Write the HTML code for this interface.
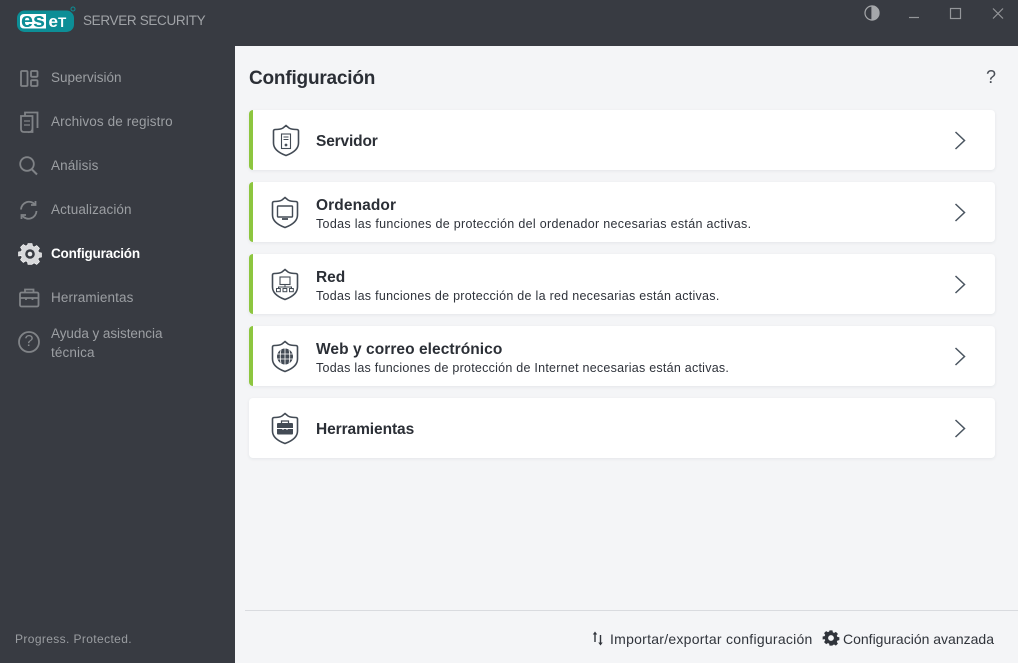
<!DOCTYPE html>
<html lang="es"><head><meta charset="utf-8"><title>ESET Server Security</title>
<style>
html,body{margin:0;padding:0}
body{width:1018px;height:663px;position:relative;overflow:hidden;background:#383b42;font-family:"Liberation Sans",sans-serif}
.t{position:absolute;white-space:nowrap;line-height:20px}
.nav{left:51px;font-size:13.5px;color:#9c9fa3;letter-spacing:.12px}
#main{position:absolute;left:235px;top:46px;width:783px;height:617px;background:#f4f5f7}
.card{position:absolute;left:249px;width:746px;height:60px;background:#fff;border-radius:4px;box-shadow:0 1px 3px rgba(40,50,60,.08);overflow:hidden}
.card.g:before{content:"";position:absolute;left:0;top:0;bottom:0;width:4px;background:#8dc63f}
.h{left:316px;font-size:15.5px;font-weight:bold;color:#2b2f36;letter-spacing:-.05px}
.s{left:316px;font-size:12.5px;color:#2e323a}
svg{position:absolute;overflow:visible}
.f{font-size:14px;color:#30343b}
</style></head><body>
<div id="main"></div>

<!-- logo -->
<svg style="left:0;top:0" width="100" height="45">
<rect x="17" y="10.5" width="57" height="21.5" rx="7.5" fill="#0d8e96"/>
<path d="M24 14H46V28.500H24Q20 28.500 20 24.500V18Q20 14 24 14Z" fill="#fff"/>
<text x="21" y="27" font-family="Liberation Sans" font-weight="bold" font-size="20" fill="#0d8e96" textLength="24" lengthAdjust="spacingAndGlyphs">es</text>
<text x="48.500" y="27" font-family="Liberation Sans" font-weight="bold" font-size="17" fill="#fff">e<tspan font-size="13.500">T</tspan></text>
<circle cx="73" cy="9" r="2" fill="none" stroke="#0d8e96"/>
</svg>
<div class="t" style="left:83px;top:11px;font-size:13.5px;color:#a0a3a7;letter-spacing:-.33px">SERVER SECURITY</div>

<!-- window controls -->
<svg style="left:0;top:0" width="1018" height="46" fill="none" stroke="#94969a" stroke-width="1.2">
<circle cx="872" cy="13" r="7" stroke="#a5a7aa"/><path d="M872 6a7 7 0 0 1 0 14Z" fill="#a5a7aa" stroke="#a5a7aa"/>
<path d="M909 17.500h10"/>
<rect x="950.500" y="8.500" width="10" height="10"/>
<path d="M993 8.500l10 10M1003 8.500l-10 10"/>
</svg>

<!-- nav icons -->
<svg style="left:0;top:0" width="235" height="400" fill="none" stroke="#808387" stroke-width="1.800">
<rect x="21" y="71" width="6.500" height="15" rx="1"/><rect x="31" y="71" width="6.500" height="5.800" rx="1"/><rect x="31" y="80.200" width="6.500" height="5.800" rx="1"/>
<path d="M25 116v-3.500h12.500v15.500M21 116h11.500v16h-8.500q-3 0-3-3V116Z"/><path d="M24 121h6M24 125h6" stroke-width="1.300"/><path d="M28 132.500q4.500-.5 4.500-5" stroke-width="1.300"/>
<circle cx="27" cy="164" r="6.800"/><path d="M32 169.500l5 5" stroke-width="2"/>
<path d="M21 209.500a8 8 0 0 1 14-5M36.500 211a8 8 0 0 1-14 5"/><path d="M35.500 201v4h-4.500M21.500 219v-4h4.500"/>
<rect x="20" y="292.500" width="18.500" height="14" rx="1.500"/><path d="M25 292.500v-3h8.500v3M20 298h18.500M26 298v2M32.500 298v2"/>
<circle cx="29" cy="342" r="10"/>
</svg>
<svg style="left:19px;top:243px" width="22" height="22" viewBox="0 0 22 22"><path d="M9 .5h4l.6 2.800 1.700.7 2.400-1.500 2.800 2.800-1.500 2.400.7 1.700 2.800.6v4l-2.800.6-.7 1.700 1.500 2.400-2.800 2.800-2.400-1.500-1.700.7L13 21.500H9l-.6-2.800-1.700-.7-2.400 1.500-2.800-2.800 1.500-2.400-.7-1.700L-.5 13V9l2.800-.6.7-1.700-1.500-2.400 2.800-2.800 2.400 1.500 1.700-.7Z" fill="#d8d9db" stroke="#fff" stroke-width=".6"/><circle cx="11" cy="11" r="4.800" fill="#383b42"/><circle cx="11" cy="11" r="2.300" fill="#e8e9ea"/></svg>

<div class="t nav" style="top:68px;letter-spacing:0">Supervisión</div>
<div class="t nav" style="top:112px">Archivos de registro</div>
<div class="t nav" style="top:156px">Análisis</div>
<div class="t nav" style="top:200px;letter-spacing:.08px">Actualización</div>
<div class="t nav" style="top:244px;color:#fff;font-weight:bold;letter-spacing:-.2px">Configuración</div>
<div class="t nav" style="top:288px">Herramientas</div>
<div class="t nav" style="top:324px;letter-spacing:-.05px">Ayuda y asistencia</div>
<div class="t nav" style="top:343px">técnica</div>
<div class="t" style="left:24.500px;top:332px;font-size:16px;color:#85888c">?</div>
<div class="t" style="left:15px;top:629px;font-size:12px;color:#9a9da1;letter-spacing:.38px">Progress. Protected.</div>

<!-- main header -->
<div class="t" style="left:249px;top:69px;font-size:19px;font-weight:bold;color:#2b2f36;letter-spacing:-.2px">Configuración</div>
<div class="t" style="left:986px;top:67px;font-size:18px;color:#4a4f57">?</div>

<!-- cards -->
<div class="card g" style="top:110px"></div>
<div class="card g" style="top:182px"></div>
<div class="card g" style="top:254px"></div>
<div class="card g" style="top:326px"></div>
<div class="card" style="top:398px"></div>

<div class="t h" style="top:132px;letter-spacing:-.15px">Servidor</div>
<div class="t h" style="top:196px;letter-spacing:.1px">Ordenador</div>
<div class="t s" style="top:214px;letter-spacing:.31px">Todas las funciones de protección del ordenador necesarias están activas.</div>
<div class="t h" style="top:268px">Red</div>
<div class="t s" style="top:286px;letter-spacing:.28px">Todas las funciones de protección de la red necesarias están activas.</div>
<div class="t h" style="top:340px;letter-spacing:.06px">Web y correo electrónico</div>
<div class="t s" style="top:358px;letter-spacing:.25px">Todas las funciones de protección de Internet necesarias están activas.</div>
<div class="t h" style="top:420px;letter-spacing:-.08px">Herramientas</div>

<!-- shields + chevrons -->
<svg style="left:0;top:0" width="1018" height="663" fill="none" stroke="#434b55" stroke-width="1.600">
<defs><path id="sh" d="M12.500 0.500L15.500 3Q18 4.500 23 4.500Q25 4.500 25 6V18Q25 26 12.500 30.500Q0 26 0 18V6Q0 4.500 2 4.500Q7 4.500 9.500 3Z"/></defs>
<use href="#sh" x="273.500" y="125"/>
<rect x="281.500" y="134" width="9" height="14.500" stroke-width="1.100"/><path d="M283.500 137h5M283.500 139.500h5" stroke-width="1"/><circle cx="286" cy="145" r=".6"/>
<use href="#sh" x="272.500" y="197"/>
<rect x="277.500" y="206" width="15" height="11" rx=".8" stroke-width="1.400"/><path d="M282 219h6" stroke-width="1.800"/>
<use href="#sh" x="272.500" y="269"/>
<rect x="280" y="277" width="10" height="7.500" stroke-width="1.100"/><path d="M285 284.500v2.500M278.500 288.500v-1.500h13v1.500" stroke-width="1"/><rect x="276.500" y="288.500" width="3.800" height="3.200" stroke-width="1"/><rect x="283" y="288.500" width="3.800" height="3.200" stroke-width="1"/><rect x="289.500" y="288.500" width="3.800" height="3.200" stroke-width="1"/>
<use href="#sh" x="272.500" y="341"/>
<circle cx="285" cy="356.500" r="8" fill="#434b55" stroke="none"/><path d="M277 354h16M277 359h16M285 348.500v16M281 349.500q-1.500 7 0 14M289 349.500q1.500 7 0 14" stroke="#fff" stroke-width=".8"/>
<use href="#sh" x="272.500" y="413"/>
<path d="M278 423h14a1 1 0 0 1 1 1v9.500a1 1 0 0 1-1 1h-14a1 1 0 0 1-1-1V424a1 1 0 0 1 1-1Z" fill="#434b55" stroke="none"/><path d="M281.500 423v-2h7v2" stroke-width="1.200"/><path d="M277 428.500h16M283 428.500v1.500M287 428.500v1.500" stroke="#fff" stroke-width="1"/>
<g stroke="#4a5560" stroke-width="1.500">
<path d="M955.500 132l9 8.500-9 8.500"/><path d="M955.500 204l9 8.500-9 8.500"/><path d="M955.500 276l9 8.500-9 8.500"/><path d="M955.500 348l9 8.500-9 8.500"/><path d="M955.500 420l9 8.500-9 8.500"/>
</g>
<path d="M245 610.500H1018" stroke="#d9dbdf" stroke-width="1"/>
<path d="M595 642v-9" stroke="#30343b" stroke-width="1.400"/><path d="M592.800 634.500h4.400l-2.200-3Z" fill="#30343b" stroke="none"/>
<path d="M600.500 635v9" stroke="#30343b" stroke-width="1.400"/><path d="M598.300 642.500h4.400l-2.200 3Z" fill="#30343b" stroke="none"/>
</svg>
<svg style="left:823px;top:630px" width="16" height="16" viewBox="0 0 22 22"><path d="M9 .5h4l.6 2.800 1.700.7 2.400-1.500 2.800 2.800-1.500 2.400.7 1.700 2.800.6v4l-2.800.6-.7 1.700 1.500 2.400-2.800 2.800-2.400-1.500-1.700.7L13 21.500H9l-.6-2.800-1.700-.7-2.400 1.500-2.800-2.800 1.500-2.400-.7-1.700L-.5 13V9l2.800-.6.7-1.700-1.500-2.400 2.800-2.800 2.400 1.500 1.700-.7Z" fill="#30343b"/><circle cx="11" cy="11" r="4" fill="#f4f5f7"/></svg>
<div class="t f" style="left:610px;top:629px;letter-spacing:.26px">Importar/exportar configuración</div>
<div class="t f" style="left:843px;top:629px">Configuración avanzada</div>
</body></html>
